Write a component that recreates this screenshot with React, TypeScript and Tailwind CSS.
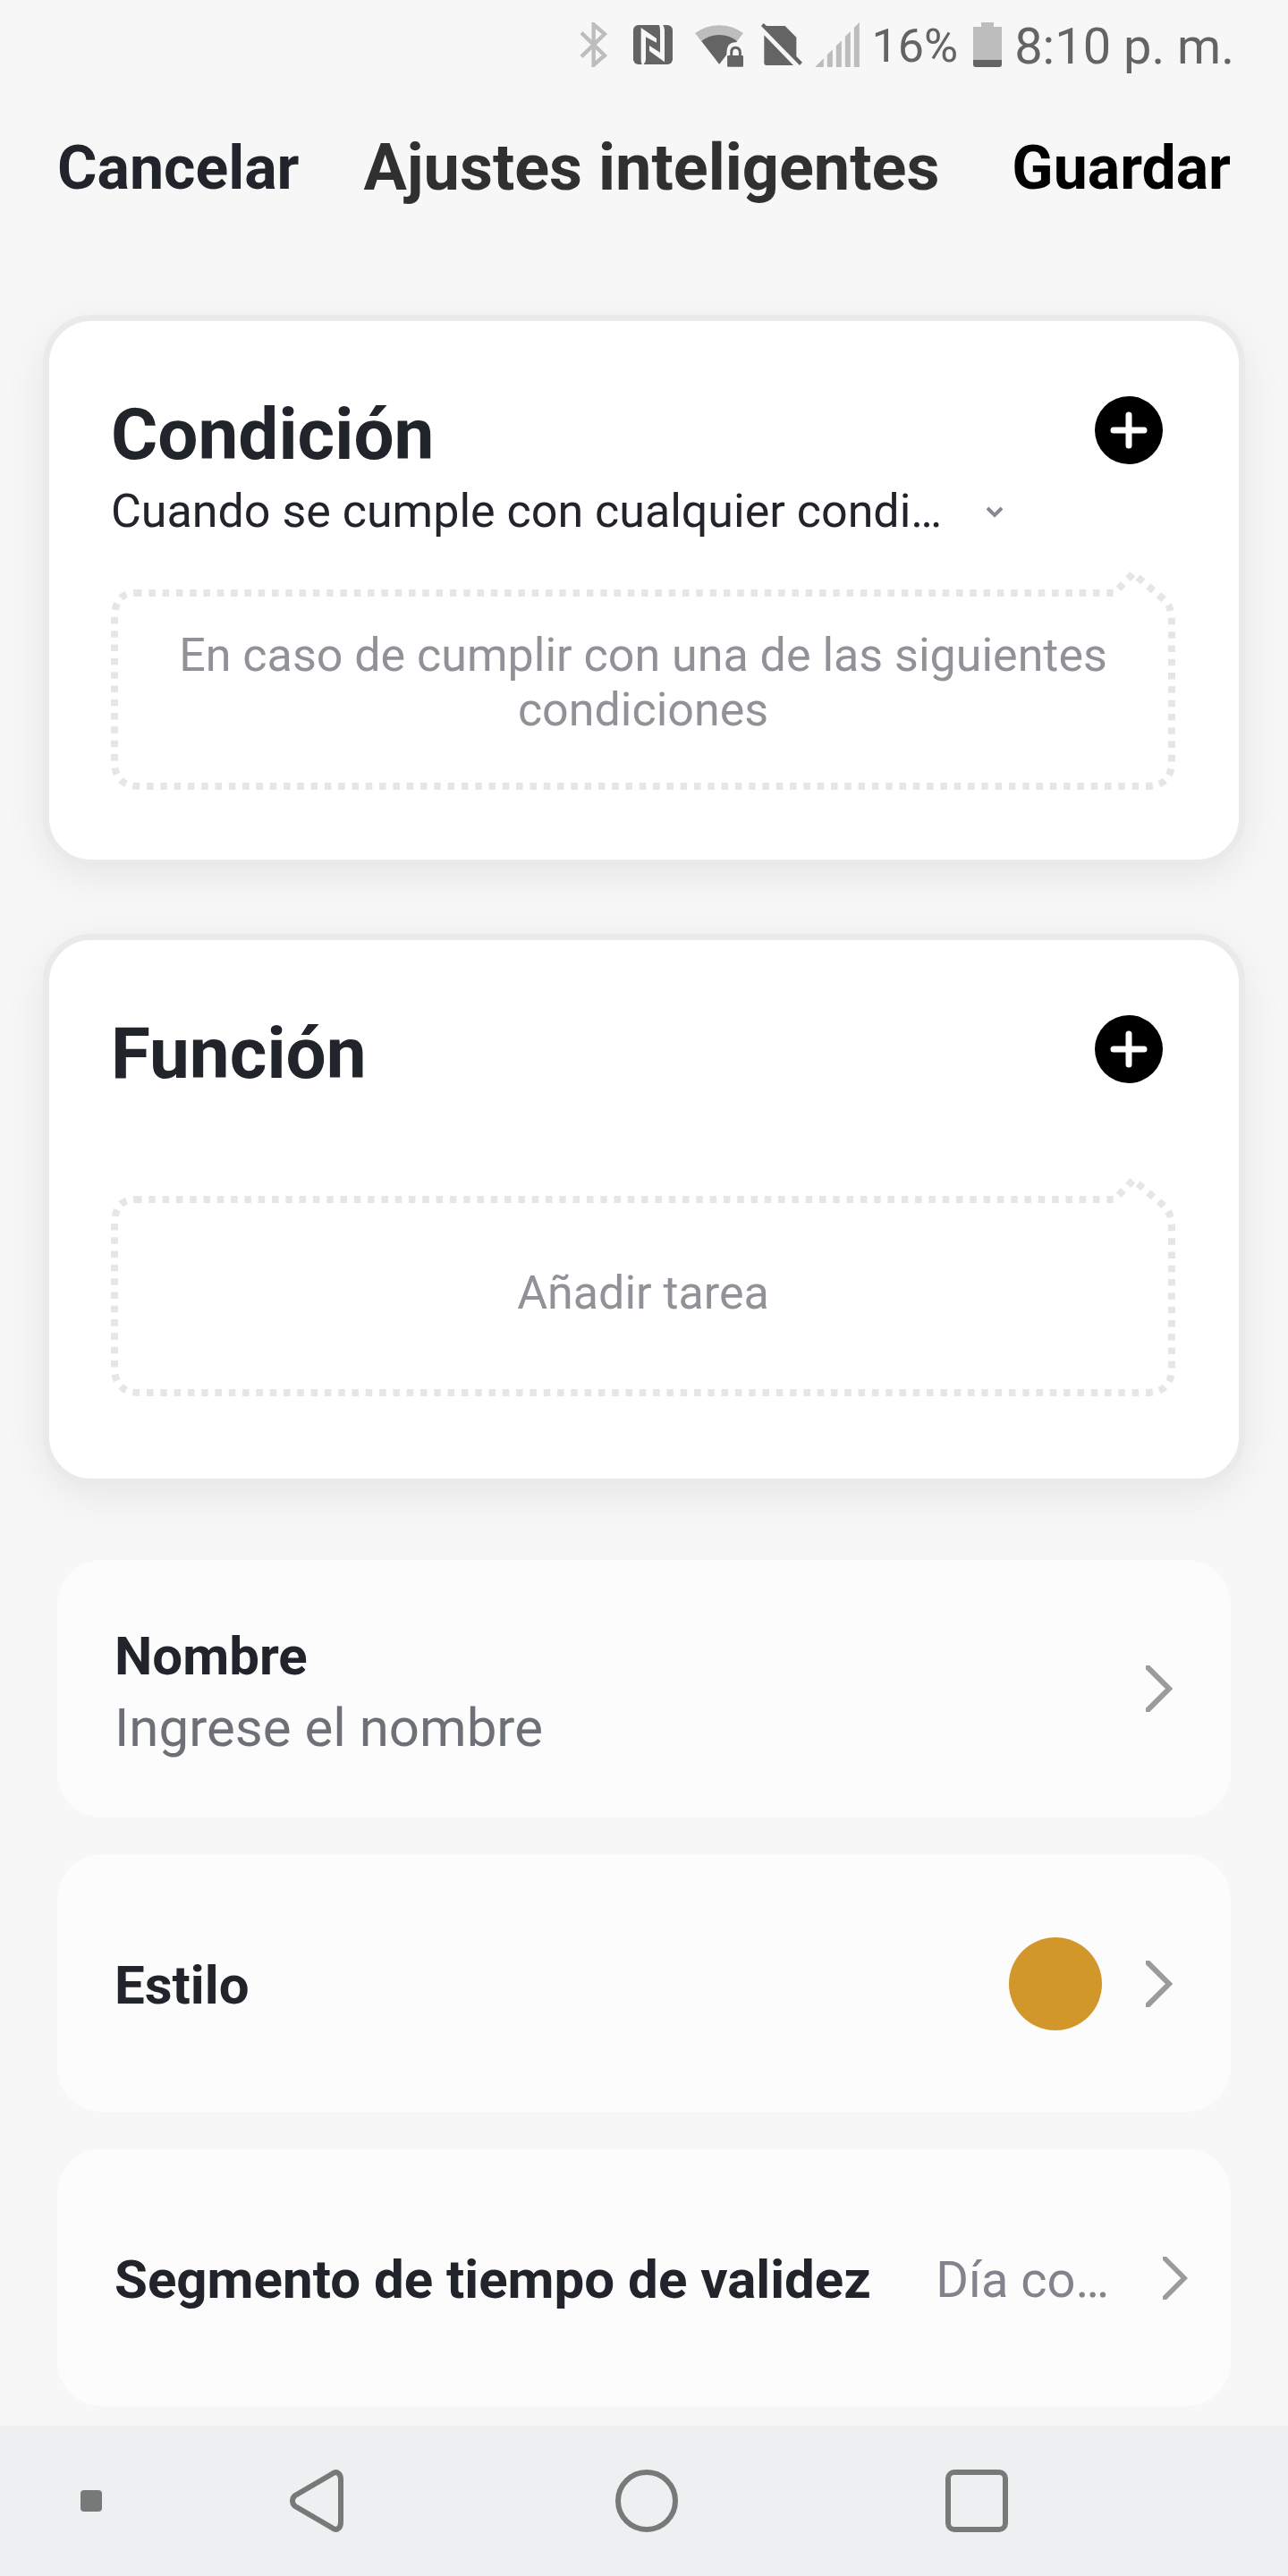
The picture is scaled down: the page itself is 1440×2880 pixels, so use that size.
import React, { useState } from 'react';

const BluetoothIcon = () => (
  <svg viewBox="86 72 93 150" className="h-[50px] w-[31px]" fill="none" stroke="#bdbdbd" strokeWidth="13" aria-hidden="true">
    <path d="M92 107 170 183 133 215V79L170 111 92 187" />
    <path d="M126 73h10M126 221h10" strokeWidth="3" />
  </svg>
);

const NfcIcon = () => (
  <svg viewBox="267 81 132 132" className="size-11" aria-hidden="true">
    <rect x="267" y="81" width="132" height="132" rx="17" fill="#646464" />
    <path fill="#f7f7f7" d="M293 90 345 126V140L309 121V196Q309 207 301 214H297Q293 208 293 198Z" />
    <path fill="#f7f7f7" d="M372 205 321 168V150L357 173V98Q357 86 353 80H365Q372 86 372 98Z" />
  </svg>
);

const WifiLockIcon = () => (
  <svg viewBox="473 75 163 147" className="h-[49px] w-[54px]" aria-hidden="true">
    <path fill="#bdbdbd" d="M473 108Q509 81 555 81T636 108L555 213Z" />
    <path fill="#646464" d="M495 135Q521 114 555 114T615 135L555 213Z" />
    <path fill="#f7f7f7" d="M580 213V175Q580 139 610 139T640 170V183L580 215Z" />
    <path fill="#646464" d="M585 183H633Q636 183 636 186V219Q636 222 633 222H585Q582 222 582 219V186Q582 183 585 183Z" />
    <path fill="none" stroke="#646464" strokeWidth="9" d="M596 184V173Q596 157 610 157T625 173V184" />
  </svg>
);

const NoSimIcon = () => (
  <svg viewBox="695 72 138 147" className="h-[49px] w-[46px]" fill="#646464" aria-hidden="true">
    <path d="M703 72 713 81H775L813 119V183L833 203 824 213 695 81Z" />
    <path d="M705 112 803 213H713Q705 213 705 205Z" />
  </svg>
);

const SignalIcon = () => (
  <svg viewBox="877 72 149 150" className="size-[50px]" fill="#bdbdbd" aria-hidden="true">
    <path d="M877 222 906 193V222ZM918 181 936 163V222H918ZM948 151 966 133V222H948ZM978 120 996 102V222H978ZM1008 90 1026 72V222H1008Z" />
  </svg>
);

const BatteryIcon = () => (
  <svg viewBox="0 0 32 50" className="h-[50px] w-8" aria-hidden="true">
    <path fill="#bdbdbd" d="M9 0h14v5h9v37H0V5h9z" />
    <path fill="#646464" d="M0 42h32v5q0 3-3 3H3q-3 0-3-3z" />
  </svg>
);

const Chevron = ({ small = false }: { small?: boolean }) => (
  <svg
    viewBox="0 0 30 52"
    className={small ? 'h-12 w-7 shrink-0' : 'h-[52px] w-[30px] shrink-0'}
    fill="none"
    stroke="#9b9b9b"
    strokeWidth="6"
    aria-hidden="true"
  >
    <path d="M0 0 26 26 0 52" />
  </svg>
);

interface SectionCardProps {
  title: string;
  addLabel: string;
  children: React.ReactNode;
}

const SectionCard: React.FC<SectionCardProps> = ({ title, addLabel, children }) => (
  <section className="flex min-h-[616px] flex-col rounded-[54px] border-[7px] border-[#eaeaea] bg-white pt-[84px] pr-[71px] pl-[69px] shadow-[0_12px_48px_rgba(0,0,0,0.07)]">
    <div className="flex items-start justify-between">
      <h2 className="text-[80px] leading-[86px] font-bold">{title}</h2>
      <button type="button" aria-label={addLabel} className="mr-[14px]">
        <svg viewBox="0 0 76 76" className="size-[76px]" aria-hidden="true">
          <circle cx="38" cy="38" r="38" fill="#000" />
          <path d="M21 38h34M38 21v34" stroke="#fff" strokeWidth="7" strokeLinecap="round" />
        </svg>
      </button>
    </div>
    {children}
  </section>
);

// dotted bubble whose tip points at the add button
const DottedBox = ({ className, children }: { className: string; children: React.ReactNode }) => (
  <div className={`relative h-56 px-12 text-center text-[52px] leading-[61px] text-[#919197] ${className}`}>
    <svg
      viewBox="0 0 1190 224"
      preserveAspectRatio="none"
      className="absolute inset-0 h-full w-full overflow-visible"
      fill="none"
      stroke="#e6e6e6"
      strokeWidth="8"
      aria-hidden="true"
    >
      <path
        strokeDasharray="7.5 7.8"
        d="M27 4H1122L1143 -18 1177 11Q1186 19 1186 34V192Q1186 220 1158 220H32Q4 220 4 192V32Q4 4 27 4"
      />
    </svg>
    <p>{children}</p>
  </div>
);

const rowClass = 'flex h-72 w-full items-center rounded-[50px] bg-[#fcfcfc] pl-16 text-left text-[60px] leading-[80px]';

export default function App() {
  const [name, setName] = useState('');
  const [mode, setMode] = useState('any');

  return (
    <div className="flex min-h-screen flex-col bg-[#f7f7f7] font-['Roboto',sans-serif] text-[#22242c]">
      <div className="flex h-[100px] items-center justify-end pr-[60px] text-[#646464]">
        <BluetoothIcon />
        <span className="ml-[29px]"><NfcIcon /></span>
        <span className="ml-[25px]"><WifiLockIcon /></span>
        <span className="ml-5"><NoSimIcon /></span>
        <span className="ml-[14px]"><SignalIcon /></span>
        <span className="ml-[14px] pt-1 text-[52px]">16%</span>
        <span className="ml-[17px]"><BatteryIcon /></span>
        <time className="ml-[14px] pt-1 text-[56px]">8:10 p. m.</time>
      </div>

      <header className="flex h-[174px] items-center px-16 pt-0.5">
        <button type="button" className="text-[68px] font-bold">Cancelar</button>
        <h1 className="ml-[72px] text-[72px] font-bold text-[#303030]">Ajustes inteligentes</h1>
        <button type="button" className="ml-auto text-[68px] font-bold text-black">Guardar</button>
      </header>

      <main className="flex-1 pt-[78px] pb-[22px]">
        <div className="flex flex-col gap-[76px] px-12">
          <SectionCard title="Condición" addLabel="Añadir condición">
            <div className="mt-[13px] flex items-center">
              <select
                aria-label="Condición"
                value={mode}
                onChange={(e) => setMode(e.target.value)}
                className="h-[60px] appearance-none text-[52px] leading-[60px]"
              >
                <option value="any">Cuando se cumple con cualquier condi…</option>
              </select>
              <svg viewBox="0 0 20 13" className="ml-12 h-[13px] w-5" fill="none" stroke="#8b8890" strokeWidth="4" aria-hidden="true">
                <path d="M2 2 10 10 18 2" />
              </svg>
            </div>
            <DottedBox className="mt-[57px] pt-[43px]">En caso de cumplir con una de las siguientes condiciones</DottedBox>
          </SectionCard>

          <SectionCard title="Función" addLabel="Añadir función">
            <DottedBox className="mt-[116px] pt-[78px]">Añadir tarea</DottedBox>
          </SectionCard>
        </div>

        <div className="mt-[84px] flex flex-col gap-[41px] px-16">
          <div className={`${rowClass} pr-[65px]`}>
            <div className="flex flex-1 flex-col pt-2">
              <label htmlFor="name" className="font-bold">Nombre</label>
              <input
                id="name"
                type="text"
                value={name}
                onChange={(e) => setName(e.target.value)}
                placeholder="Ingrese el nombre"
                className="h-20 w-full bg-transparent outline-none placeholder:text-[#6d7077]"
              />
            </div>
            <Chevron />
          </div>

          <button type="button" className={`${rowClass} pt-0.5 pr-[65px]`}>
            <span className="pt-1 font-bold">Estilo</span>
            <span className="mr-[49px] ml-auto size-[104px] rounded-full bg-[#d2972b]" />
            <Chevron />
          </button>

          <button type="button" className={`${rowClass} pt-0.5 pr-12`}>
            <span className="pt-1 font-bold">Segmento de tiempo de validez</span>
            <span className="mr-[60px] ml-auto pt-1 text-[56px] text-[#84828c]">Día co…</span>
            <Chevron small />
          </button>
        </div>
      </main>

      <nav className="grid h-[168px] grid-cols-[204fr_300fr_438fr_300fr_198fr] place-items-center bg-[#eeeff1]">
        <button type="button" aria-label="Ocultar barra" className="size-6 rounded-[4px] bg-[#777978]" />
        <button type="button" aria-label="Atrás">
          <svg viewBox="0 0 60 70" className="h-[70px] w-[60px]" fill="none" stroke="#777978" strokeWidth="6" aria-hidden="true">
            <path d="M57 11V59C57 66 52 69 47 65L6 41C2 38 2 32 6 29L47 5C52 1 57 4 57 11Z" />
          </svg>
        </button>
        <button type="button" aria-label="Inicio" className="size-[70px] rounded-full border-[6px] border-[#777978]" />
        <button type="button" aria-label="Recientes" className="size-[70px] rounded-[10px] border-[6px] border-[#777978]" />
      </nav>
    </div>
  );
}
